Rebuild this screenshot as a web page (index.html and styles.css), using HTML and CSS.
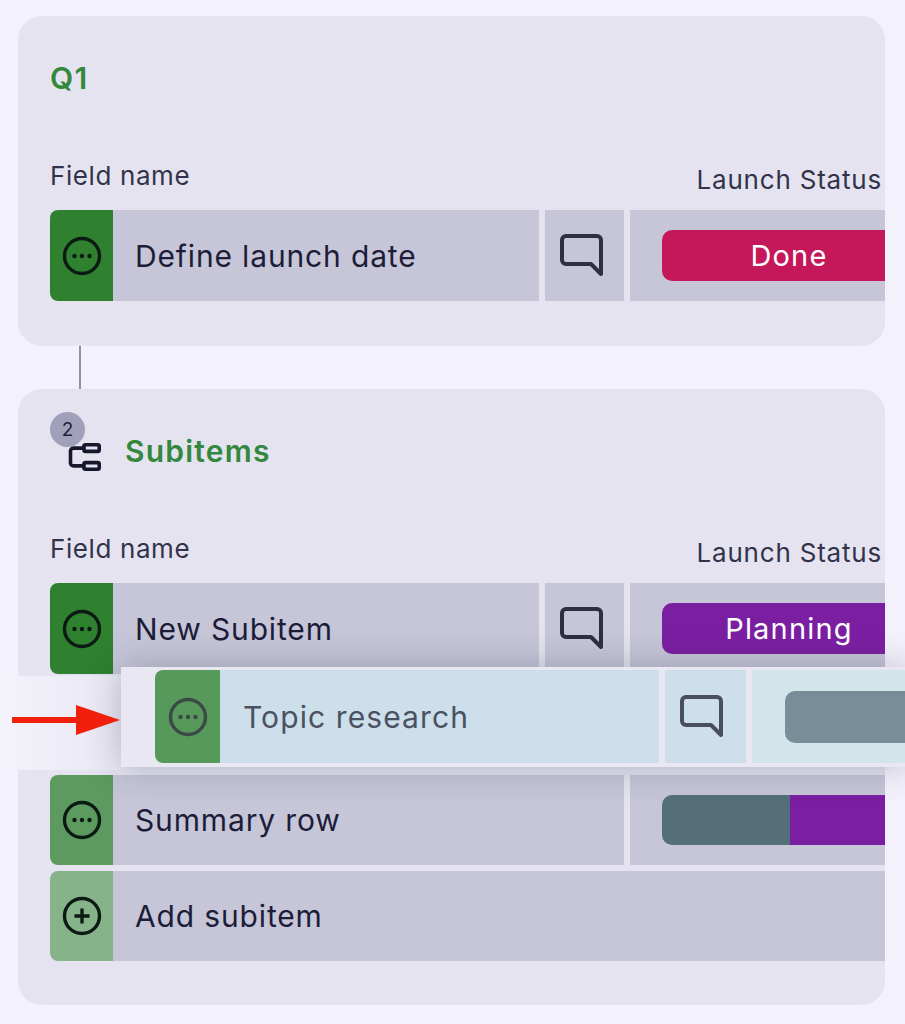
FILE: index.html
```html
<!DOCTYPE html>
<html lang="en">

<head>
	<meta charset="UTF-8">
	<meta name="viewport" content="width=device-width, initial-scale=1.0">
	<title>Subitems</title>
	<link rel="stylesheet" href="styles.css">
</head>

<body>
	<svg class="icon-defs" width="0" height="0">
		<symbol id="icon-more" viewBox="0 0 40 40">
			<circle cx="20" cy="20" r="17.5" fill="none" stroke="currentColor" stroke-width="3.4" />
			<circle cx="12.5" cy="20" r="2.2" fill="currentColor" />
			<circle cx="20" cy="20" r="2.2" fill="currentColor" />
			<circle cx="27.5" cy="20" r="2.2" fill="currentColor" />
		</symbol>
		<symbol id="icon-add" viewBox="0 0 40 40">
			<circle cx="20" cy="20" r="17.5" fill="none" stroke="currentColor" stroke-width="3.4" />
			<path d="M20 12.5v15M12.5 20h15" fill="none" stroke="currentColor" stroke-width="3.4" />
		</symbol>
		<symbol id="icon-comment" viewBox="0 0 44 44">
			<path d="M6 2h31a4 4 0 0 1 4 4v34L31 30H6a4 4 0 0 1-4-4V6a4 4 0 0 1 4-4z" fill="none"
				stroke="currentColor" stroke-width="4" stroke-linejoin="round" />
		</symbol>
	</svg>

	<div class="page">
		<section class="card">
			<h2 class="card-title">Q1</h2>
			<div class="labels">
				<span class="label-name">Field name</span>
				<span class="label-status">Launch Status</span>
			</div>
			<div class="row">
				<div class="handle"><svg class="icon-round"><use href="#icon-more" /></svg></div>
				<div class="cell-name">Define launch date</div>
				<div class="cell-comment"><svg class="icon-comment"><use href="#icon-comment" /></svg></div>
				<div class="cell-status">
					<div class="pill pill--done">Done</div>
				</div>
			</div>
		</section>

		<div class="connector"></div>

		<section class="card">
			<div class="card-head">
				<div class="subitems-icon">
					<svg width="33" height="28" viewBox="0 0 33 28" fill="none" stroke="#16172c" stroke-width="3.6">
						<rect x="16" y="1.8" width="15.2" height="6.6" rx="1.5" />
						<rect x="16" y="19.6" width="15.2" height="6.6" rx="1.5" />
						<path d="M16 5.1H5.5a3 3 0 0 0-3 3v11.8a3 3 0 0 0 3 3H16" />
					</svg>
					<span class="badge">2</span>
				</div>
				<h2 class="card-title">Subitems</h2>
			</div>
			<div class="labels">
				<span class="label-name">Field name</span>
				<span class="label-status">Launch Status</span>
			</div>
			<div class="row">
				<div class="handle"><svg class="icon-round"><use href="#icon-more" /></svg></div>
				<div class="cell-name">New Subitem</div>
				<div class="cell-comment"><svg class="icon-comment"><use href="#icon-comment" /></svg></div>
				<div class="cell-status">
					<div class="pill pill--planning">Planning</div>
				</div>
			</div>
			<div class="drop-gap"></div>
			<div class="row row--short">
				<div class="handle handle--summary"><svg class="icon-round"><use href="#icon-more" /></svg></div>
				<div class="cell-name">Summary row</div>
				<div class="cell-status">
					<div class="pill pill--split">
						<span class="split-grey"></span>
						<span class="split-purple"></span>
					</div>
				</div>
			</div>
			<div class="row row--short row--add">
				<div class="handle handle--add"><svg class="icon-round"><use href="#icon-add" /></svg></div>
				<div class="cell-name">Add subitem</div>
			</div>
		</section>

		<!-- the row being dragged and its red pointer -->
		<div class="drag-band"></div>
		<div class="drag-row">
			<div class="handle handle--drag"><svg class="icon-round"><use href="#icon-more" /></svg></div>
			<div class="cell-name cell-name--drag">Topic research</div>
			<div class="cell-comment cell-comment--drag"><svg class="icon-comment"><use href="#icon-comment" /></svg></div>
			<div class="cell-status cell-status--drag">
				<div class="pill pill--empty"></div>
			</div>
		</div>
		<svg class="arrow" width="110" height="32" viewBox="0 0 110 32">
			<path d="M0 13h64V1l44 15-44 15V19H0z" fill="#f0200c" />
		</svg>
	</div>
</body>

</html>
```

FILE: styles.css
```css
* {
	box-sizing: border-box;
}

body {
	margin: 0;
	background-color: #f3f2fc;
	font-family: Inter, 'Noto Sans', sans-serif;
}

.icon-defs {
	position: absolute;
}

.page {
	position: relative;
	width: 905px;
	height: 1024px;
	padding: 16px 20px 0 18px;
	overflow: hidden;
}

.card {
	height: 330px;
	padding: 44px 0 0 32px;
	background-color: #e4e3ef;
	border-radius: 24px;
	overflow: hidden;
}

.card + .connector + .card {
	height: 616px;
}

.card-title {
	margin: 0;
	color: #34883e;
	font-size: 30px;
	font-weight: 600;
	letter-spacing: 1.2px;
	line-height: 36px;
}

.card-head {
	display: flex;
	align-items: center;
}

.subitems-icon {
	position: relative;
	width: 75px;
	height: 36px;
}

.subitems-icon svg {
	position: absolute;
	left: 18px;
	top: 10px;
}

.badge {
	position: absolute;
	left: 0;
	top: -21px;
	width: 35px;
	height: 35px;
	background-color: #a0a0ba;
	border-radius: 50%;
	color: #1d1e38;
	font-size: 19px;
	line-height: 35px;
	text-align: center;
}

.labels {
	display: flex;
	justify-content: space-between;
	height: 34px;
	margin: 65px 0 15px;
	padding-right: 3px;
	color: #32334a;
	font-size: 26px;
	letter-spacing: 0.6px;
	line-height: 30px;
}

.label-status {
	align-self: flex-end;
	letter-spacing: 0.8px;
}

.connector {
	width: 2px;
	height: 43px;
	margin-left: 61px;
	background-color: #8e8ea6;
}

.row {
	display: flex;
	gap: 6px;
	height: 91px;
}

.row--short {
	height: 90px;
	margin-bottom: 6px;
}

.handle {
	display: flex;
	flex: none;
	align-items: center;
	justify-content: center;
	width: 63px;
	margin-right: -6px;
	background-color: #2f802f;
	border-radius: 8px 0 0 8px;
	color: #0b1a12;
}

.handle--summary {
	background-color: #5c9a60;
}

.handle--add {
	background-color: #87b38b;
}

.icon-round {
	width: 40px;
	height: 40px;
}

.icon-comment {
	width: 44px;
	height: 44px;
}

.cell-name {
	display: flex;
	flex: none;
	align-items: center;
	width: 426px;
	padding-left: 22px;
	background-color: #c6c6d8;
	color: #1c1d38;
	font-size: 30px;
	letter-spacing: 0.85px;
}

.row--short .cell-name {
	width: 511px;
}

.row--add .cell-name {
	flex: 1;
}

.cell-comment {
	display: flex;
	flex: none;
	align-items: center;
	justify-content: center;
	width: 79px;
	padding-right: 6px;
	background-color: #c6c6d8;
	color: #2e2f45;
}

.cell-status {
	display: flex;
	flex: 1;
	align-items: center;
	min-width: 0;
	padding-left: 32px;
	background-color: #c6c6d8;
	overflow: hidden;
}

.pill {
	flex: none;
	width: 254px;
	height: 51px;
	border-radius: 10px 0 0 10px;
	color: #fff;
	font-size: 29px;
	letter-spacing: 1.2px;
	line-height: 51px;
	text-align: center;
}

.pill--done {
	background-color: #c5185a;
}

.pill--planning {
	background-color: #7b1fa2;
}

.pill--split {
	display: flex;
	height: 50px;
	overflow: hidden;
}

.split-grey {
	width: 128px;
	background-color: #546e7a;
}

.split-purple {
	flex: 1;
	background-color: #7b1fa2;
}

.drop-gap {
	height: 101px;
}

.drag-band {
	position: absolute;
	left: 0;
	top: 676px;
	width: 125px;
	height: 94px;
	background: linear-gradient(to right, #f4f3fc, #e8e7f2);
}

.drag-row {
	position: absolute;
	left: 121px;
	top: 667px;
	right: -4px;
	display: flex;
	gap: 6px;
	height: 100px;
	padding: 3px 0 4px 34px;
	background-color: #e9e8f2;
	box-shadow: 0 0 36px rgba(40, 40, 70, 0.28);
}

.handle--drag {
	width: 65px;
	background-color: #57985b;
	color: #3a4a45;
}

.cell-name--drag {
	width: 439px;
	background-color: #cddfea;
	color: #4a5262;
	padding-left: 23px;
	letter-spacing: 1.1px;
}

.cell-comment--drag {
	width: 81px;
	padding-right: 8px;
	background-color: #cddfea;
	color: #4a4f60;
}

.cell-status--drag {
	padding-left: 33px;
	background-color: #d1e5ea;
}

.pill--empty {
	background-color: #778d98;
	height: 52px;
}

.arrow {
	position: absolute;
	left: 12px;
	top: 704px;
}
```
